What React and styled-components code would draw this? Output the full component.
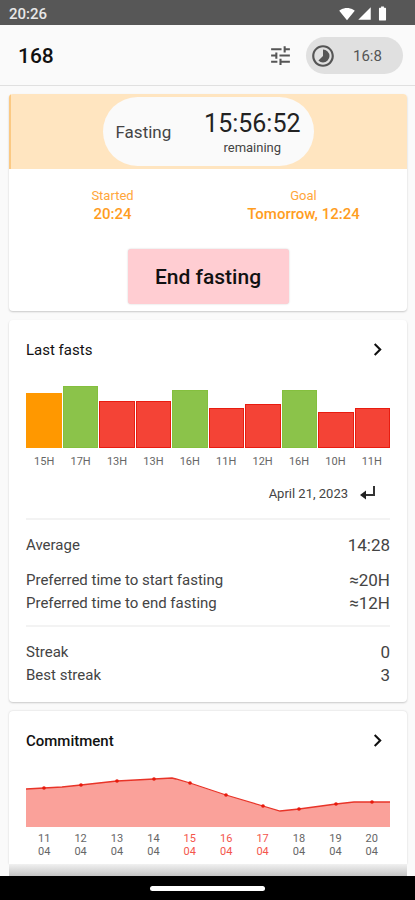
import React from "react";
import styled, { createGlobalStyle } from "styled-components";
import {
  MdTune,
  MdTimelapse,
  MdNavigateNext,
  MdSignalWifi4Bar,
  MdSignalCellular4Bar,
  MdBatteryFull,
} from "react-icons/md";

const GlobalStyle = createGlobalStyle`
  * {
    box-sizing: border-box;
  }
  body {
    margin: 0;
    background: #fafafa;
    color: #444;
    font-family: Roboto, sans-serif;
  }
  h1, h2, p, dl, dd {
    margin: 0;
  }
  button {
    border: none;
    padding: 0;
    color: inherit;
    font-family: inherit;
    cursor: pointer;
  }
`;

const Page = styled.div`
  display: flex;
  flex-direction: column;
  height: 100vh;
`;

const StatusBar = styled.div`
  display: flex;
  align-items: center;
  justify-content: space-between;
  height: 25px;
  flex: none;
  padding: 2px 24px 0 9px;
  background: #575757;
  color: #fff;
  font-size: 15px;
  font-weight: 500;
`;

const Clock = styled.span`
  color: #e8e8e8;
`;

const StatusIcons = styled.div`
  display: flex;
  align-items: center;
  gap: 2px;
`;

const AppBar = styled.header`
  display: flex;
  align-items: center;
  height: 61px;
  flex: none;
  padding: 1px 12px 0 18px;
  border-bottom: 1px solid #e0e0e0;
`;

const AppTitle = styled.h1`
  flex: 1;
  color: #111;
  font-size: 21px;
  font-weight: 500;
`;

const IconButton = styled.button`
  display: flex;
  background: none;
`;

const PlanChip = styled.button`
  display: flex;
  align-items: center;
  gap: 17px;
  width: 97px;
  height: 37px;
  margin-left: 13px;
  padding-left: 4px;
  border-radius: 19px;
  background: #e0e0e0;
  color: #555;
  font-size: 15px;
`;

const Content = styled.main`
  display: flex;
  flex-direction: column;
  gap: 9px;
  flex: 1;
  min-height: 0;
  padding: 8px 8px 0 9px;
  overflow: hidden;
`;

const Card = styled.section`
  flex: none;
  padding: ${(props) => (props.$flush ? "0 0 7px" : "17px 17px 0")};
  border-radius: 4px;
  background: #fff;
  box-shadow: 0 1px 2px rgba(0, 0, 0, 0.2);
  overflow: hidden;
`;

const Banner = styled.div`
  display: flex;
  justify-content: center;
  align-items: center;
  height: 75px;
  background: #ffe5c0;
  box-shadow: inset 2px 0 #fbc983;
`;

const Timer = styled.div`
  display: flex;
  align-items: center;
  justify-content: space-between;
  width: 211px;
  height: 69px;
  padding: 0 13px;
  border-radius: 35px;
  background: #fafafa;
`;

const State = styled.span`
  font-size: 17px;
`;

const Remaining = styled.div`
  color: #444;
  font-size: 13px;
  line-height: 17px;
  text-align: center;
`;

const Digits = styled.div`
  color: #222;
  font-size: 25px;
  line-height: 31px;
`;

const Times = styled.div`
  display: grid;
  grid-template-columns: 1fr 1fr;
  padding: 18px 8px 0;
`;

const Time = styled.div`
  color: #ffa63a;
  font-size: 13px;
  line-height: 18px;
  text-align: center;
`;

const TimeValue = styled.div`
  color: #ff9d1e;
  font-size: 15px;
  font-weight: 500;
`;

const EndButton = styled.button`
  display: block;
  width: 161px;
  height: 55px;
  margin: 26px auto 0;
  border-radius: 3px;
  background: #ffcdd2;
  box-shadow: 0 0 2px rgba(0, 0, 0, 0.2);
  color: #111;
  font-size: 21px;
  font-weight: 500;
`;

const CardHeader = styled.div`
  display: flex;
  align-items: center;
  justify-content: space-between;
  height: 25px;
  color: #111;
`;

const CardTitle = styled.h2`
  font-size: 15px;
  font-weight: ${(props) => (props.$strong ? 500 : 400)};
`;

const Bars = styled.div`
  display: grid;
  grid-template-columns: repeat(10, 1fr);
  gap: 1px;
  align-items: end;
  height: 62px;
  margin-top: 24px;
`;

const barColors = {
  orange: ["#ff9800", "#ff9800"],
  green: ["#8bc34a", "#84bf3e"],
  red: ["#f44336", "#e81c10"],
};

const Bar = styled.div`
  background: ${(props) => barColors[props.$color][0]};
  border: 1px solid ${(props) => barColors[props.$color][1]};
`;

const Labels = styled.div`
  display: grid;
  grid-template-columns: repeat(10, 1fr);
  margin-top: ${(props) => (props.$loose ? "7px" : "5px")};
  color: #666;
  font-size: 11px;
  line-height: 13px;
  text-align: center;
`;

const Label = styled.span`
  color: ${(props) => props.$missed && "#f4554b"};
`;

const DateRow = styled.div`
  display: flex;
  align-items: center;
  justify-content: flex-end;
  gap: 12px;
  height: 20px;
  margin-top: 15px;
  padding-right: 15px;
  font-size: 13px;
`;

const Stats = styled.dl`
  margin-top: ${(props) => (props.$first ? "15px" : "11px")};
  padding-top: 13px;
  border-top: 2px solid #f3f3f3;
`;

const Stat = styled.div`
  display: flex;
  justify-content: space-between;
  align-items: center;
  height: 23px;
  margin-bottom: ${(props) => props.$spaced && "12px"};
  font-size: 15px;
`;

const StatValue = styled.dd`
  font-size: 17px;
`;

const StatsEnd = styled.div`
  height: 16px;
`;

const Chart = styled.svg`
  display: block;
  width: 100%;
  height: 52px;
  margin-top: 22px;
`;

const NextCard = styled.div`
  flex: 1;
  min-height: 11px;
  background: linear-gradient(#f1f1f1, #c4c4c4);
`;

const CommitmentGroup = styled.div`
  display: flex;
  flex-direction: column;
  flex: 1;
`;

const CommitmentCard = styled(Card)`
  padding-bottom: 6px;
  border-radius: 4px 4px 0 0;
  box-shadow: 0 0 2px rgba(0, 0, 0, 0.18);
`;

const NavBar = styled.div`
  display: flex;
  align-items: center;
  justify-content: center;
  height: 24px;
  flex: none;
  background: #000;
`;

const Handle = styled.div`
  width: 115px;
  height: 5px;
  border-radius: 3px;
  background: #fff;
`;

const fasts = [
  { hours: 15, color: "orange" },
  { hours: 17, color: "green" },
  { hours: 13, color: "red" },
  { hours: 13, color: "red" },
  { hours: 16, color: "green" },
  { hours: 11, color: "red" },
  { hours: 12, color: "red" },
  { hours: 16, color: "green" },
  { hours: 10, color: "red" },
  { hours: 11, color: "red" },
];

const days = [11, 12, 13, 14, 15, 16, 17, 18, 19, 20];
const missedDays = [15, 16, 17];

const line =
  "0,14 18,13 36,12 55,10 73,8 91,6 128,4 146,3 150,4 164,8 200,20 237,31 254,36 273,34 310,29 328,27 364,27";

const points = [
  [18, 13],
  [55, 10],
  [91, 6],
  [128, 4],
  [164, 8],
  [200, 20],
  [237, 31],
  [273, 34],
  [310, 29],
  [346, 27],
];

const CommitmentChart = () => (
  <Chart viewBox="0 0 364 52" preserveAspectRatio="none">
    <polygon points={`0,52 ${line} 364,52`} fill="#faa19a" />
    <polyline points={line} fill="none" stroke="#e83428" strokeWidth="1.3" />
    {points.map(([x, y]) => (
      <circle key={x} cx={x} cy={y} r="1.8" fill="#e8190c" />
    ))}
  </Chart>
);

const ReturnIcon = () => (
  <svg width="15" height="16" viewBox="0 0 15 16">
    <path d="M14 1v9H5" fill="none" stroke="#333" strokeWidth="2" />
    <path d="M0 10l6-4.5v9z" fill="#222" />
  </svg>
);

const App = () => {
  return (
    <Page>
      <GlobalStyle />
      <StatusBar>
        <Clock>20:26</Clock>
        <StatusIcons>
          <MdSignalWifi4Bar size={16} />
          <MdSignalCellular4Bar size={15} />
          <MdBatteryFull size={17} />
        </StatusIcons>
      </StatusBar>
      <AppBar>
        <AppTitle>168</AppTitle>
        <IconButton aria-label="Settings">
          <MdTune size={25} color="#555" />
        </IconButton>
        <PlanChip>
          <MdTimelapse size={26} />
          16:8
        </PlanChip>
      </AppBar>
      <Content>
        <Card $flush>
          <Banner>
            <Timer>
              <State>Fasting</State>
              <Remaining>
                <Digits>15:56:52</Digits>
                remaining
              </Remaining>
            </Timer>
          </Banner>
          <Times>
            <Time>
              Started
              <TimeValue>20:24</TimeValue>
            </Time>
            <Time>
              Goal
              <TimeValue>Tomorrow, 12:24</TimeValue>
            </Time>
          </Times>
          <EndButton>End fasting</EndButton>
        </Card>

        <Card>
          <CardHeader>
            <CardTitle>Last fasts</CardTitle>
            <IconButton aria-label="All fasts">
              <MdNavigateNext size={25} />
            </IconButton>
          </CardHeader>
          <Bars>
            {fasts.map((fast, i) => (
              <Bar
                key={i}
                $color={fast.color}
                style={{ height: `${(fast.hours / 17) * 100}%` }}
              />
            ))}
          </Bars>
          <Labels $loose>
            {fasts.map((fast, i) => (
              <Label key={i}>{fast.hours}H</Label>
            ))}
          </Labels>
          <DateRow>
            April 21, 2023
            <IconButton aria-label="Back to today">
              <ReturnIcon />
            </IconButton>
          </DateRow>
          <Stats $first>
            <Stat $spaced>
              <dt>Average</dt>
              <StatValue>14:28</StatValue>
            </Stat>
            <Stat>
              <dt>Preferred time to start fasting</dt>
              <StatValue>≈20H</StatValue>
            </Stat>
            <Stat>
              <dt>Preferred time to end fasting</dt>
              <StatValue>≈12H</StatValue>
            </Stat>
          </Stats>
          <Stats>
            <Stat>
              <dt>Streak</dt>
              <StatValue>0</StatValue>
            </Stat>
            <Stat>
              <dt>Best streak</dt>
              <StatValue>3</StatValue>
            </Stat>
          </Stats>
          <StatsEnd />
        </Card>

        <CommitmentGroup>
          <CommitmentCard>
            <CardHeader>
              <CardTitle $strong>Commitment</CardTitle>
              <IconButton aria-label="Commitment details">
                <MdNavigateNext size={25} />
              </IconButton>
            </CardHeader>
            <CommitmentChart />
            <Labels>
              {days.map((day) => (
                <Label key={day} $missed={missedDays.includes(day)}>
                  {day}
                  <br />
                  04
                </Label>
              ))}
            </Labels>
          </CommitmentCard>
          <NextCard />
        </CommitmentGroup>
      </Content>
      <NavBar>
        <Handle />
      </NavBar>
    </Page>
  );
};

export default App;
